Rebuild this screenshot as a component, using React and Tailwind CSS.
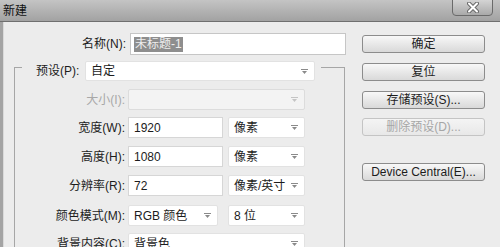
import React from 'react';

const Arrow = ({ light }) => (
    <svg width="7" height="5" viewBox="0 0 7 5">
        <path d="M0 0.5h7" stroke={light ? '#c4c4c4' : '#8a8a8a'} strokeWidth="1" />
        <path d="M1 2h5l-2.5 3z" fill={light ? '#c4c4c4' : '#8a8a8a'} />
    </svg>
);

const Select = ({ value, w, disabled }) => (
    <div className={`${w} h-[21px] flex items-center justify-between pl-[5px] pr-[6px] rounded-[2px] border ${disabled ? 'border-[#dcdcdc] bg-[#f3f3f3]' : 'border-[#e2e2e2] bg-white'}`}>
        <span>{value}</span>
        <Arrow light={disabled} />
    </div>
);

const Input = ({ value, w }) => (
    <div className={`${w} h-[21px] flex items-center pl-[5px] bg-white border border-[#d6d6d6]`}>
        {value}
    </div>
);

const Button = ({ label, disabled, mt }) => (
    <div
        className={`${mt} w-[123px] h-[18px] flex items-center justify-center rounded-[3px] border bg-linear-to-b ${
            disabled
                ? 'border-[#c4c4c4] from-[#f4f4f4] to-[#e8e8e8] text-[#a6a6a6]'
                : 'border-[#8c8c8c] from-[#f8f8f8] to-[#d9d9d9] text-[#1c1c1c]'
        }`}
    >
        {label}
    </div>
);

const Row = ({ label, mt, disabled, children }) => (
    <div className={`${mt} h-[21px] flex items-center`}>
        <div className={`w-[110px] text-right ${disabled ? 'text-[#a8a8a8]' : ''}`}>{label}</div>
        <div className="ml-[3px] flex gap-[5px]">{children}</div>
    </div>
);

export default function App() {
    return (
        <div className="w-[500px] h-[247px] overflow-hidden bg-[#ececec] text-[12px] text-[#1c1c1c] font-['Liberation_Sans','Noto_Sans_CJK_SC',sans-serif]">
            {/* title bar */}
            <div className="h-[22px] flex justify-between items-start bg-linear-to-b from-[#c4c4c4] to-[#a2a2a2] border-b border-[#6f6f6f]">
                <div className="pl-[3px] leading-[22px] text-[#111]">新建</div>
                <div className="-mt-[1px] mr-[7px] w-[41px] h-[17px] flex items-center justify-center rounded-b-[4px] border border-[#6a6a6a] bg-linear-to-b from-[#d4d4d4] to-[#a9a9a9]">
                    <svg width="12" height="11" viewBox="0 0 12 11">
                        <path d="M2 1.5l8 8M10 1.5l-8 8" stroke="#6a6a6a" strokeWidth="4" strokeLinecap="round" />
                        <path d="M2 1.5l8 8M10 1.5l-8 8" stroke="#ffffff" strokeWidth="2" strokeLinecap="round" />
                    </svg>
                </div>
            </div>

            <div className="flex h-[225px] border-l-[3px] border-[#a4a4a4]">
                {/* form side */}
                <div className="w-[350px] border-l border-[#dadada]">
                    <div className="mt-[11px] h-[22px] flex items-center">
                        <div className="w-[122px] text-right">名称(N):</div>
                        <div className="ml-[4px] w-[216px] h-[22px] flex items-center pl-[3px] bg-white border border-[#c6c6c6]">
                            <span className="bg-[#8e8e8e] text-[#eeeeee] leading-[15px] px-[1px]">未标题-1</span>
                        </div>
                    </div>

                    <div className="mt-[12px] ml-[10px] w-[331px] h-[200px] border-t border-l border-r border-[#a6a6a6]">
                        <div className="-mt-[7px] ml-[7px] w-[299px] h-[20px] flex items-center bg-[#ececec]">
                            <div className="pl-[14px] w-[60px]">预设(P):</div>
                            <div className="ml-[3px] w-[230px] h-[20px] flex items-center justify-between pl-[5px] pr-[6px] rounded-[2px] border border-[#e2e2e2] bg-white">
                                <span>自定</span>
                                <Arrow />
                            </div>
                        </div>

                        <Row label="大小(I):" mt="mt-[8px]" disabled>
                            <Select value="" w="w-[177px]" disabled />
                        </Row>
                        <Row label="宽度(W):" mt="mt-[7px]">
                            <Input value="1920" w="w-[95px]" />
                            <Select value="像素" w="w-[77px]" />
                        </Row>
                        <Row label="高度(H):" mt="mt-[8px]">
                            <Input value="1080" w="w-[95px]" />
                            <Select value="像素" w="w-[77px]" />
                        </Row>
                        <Row label="分辨率(R):" mt="mt-[8px]">
                            <Input value="72" w="w-[95px]" />
                            <Select value="像素/英寸" w="w-[77px]" />
                        </Row>
                        <Row label="颜色模式(M):" mt="mt-[9px]">
                            <Select value="RGB 颜色" w="w-[90px]" />
                            <div className="ml-[5px]">
                                <Select value="8 位" w="w-[77px]" />
                            </div>
                        </Row>
                        <Row label="背景内容(C):" mt="mt-[7px]">
                            <Select value="背景色" w="w-[177px]" />
                        </Row>
                    </div>
                </div>

                {/* buttons */}
                <div className="ml-[9px] flex flex-col">
                    <Button label="确定" mt="mt-[13px]" />
                    <Button label="复位" mt="mt-[10px]" />
                    <Button label="存储预设(S)..." mt="mt-[10px]" />
                    <Button label="删除预设(D)..." mt="mt-[9px]" disabled />
                    <Button label="Device Central(E)..." mt="mt-[27px]" />
                </div>
            </div>
        </div>
    );
}
